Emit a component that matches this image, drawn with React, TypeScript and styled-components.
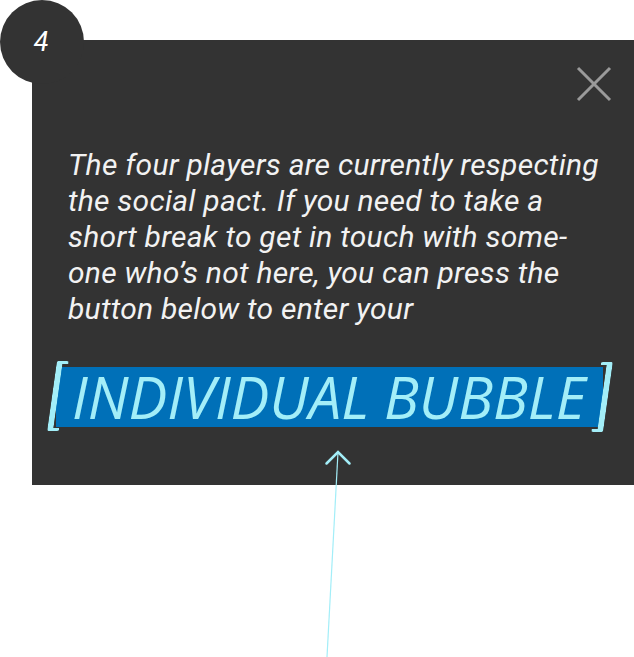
import React from "react";
import styled, { createGlobalStyle } from "styled-components";

const Global = createGlobalStyle`
  html, body { margin: 0; padding: 0; background: #ffffff; }
  body { font-family: Roboto, "Noto Sans", sans-serif; }
`;

const Page = styled.div`
  position: relative;
  width: 634px;
  height: 657px;
  overflow: hidden;
  padding: 40px 0 0 32px;
  box-sizing: border-box;
`;

const Panel = styled.section`
  position: relative;
  width: 602px;
  height: 445px;
  background: #333333;
  box-sizing: border-box;
  padding: 107px 0 0 36px;
  display: flex;
  flex-direction: column;
`;

const Badge = styled.div`
  position: absolute;
  left: -32px;
  top: -40px;
  width: 84px;
  height: 84px;
  border-radius: 50%;
  background: #333333;
  display: flex;
  align-items: center;
  justify-content: center;
  color: #ffffff;
  font-family: Roboto, sans-serif;
  font-style: italic;
  font-size: 27px;
  padding-right: 2px;
  box-sizing: border-box;
`;

const Close = styled.button`
  position: absolute;
  right: 22px;
  top: 26px;
  width: 36px;
  height: 36px;
  padding: 0;
  border: none;
  background: transparent;
  display: flex;
  align-items: center;
  justify-content: center;
`;

const Message = styled.p`
  margin: 0;
  font-family: Roboto, sans-serif;
  font-style: italic;
  font-weight: 400;
  font-size: 30px;
  line-height: 36px;
  letter-spacing: 0.25px;
  color: #f2f2f2;
  white-space: nowrap;
`;

const BubbleRow = styled.div`
  margin-top: 34px;
  margin-left: -20px;
  display: flex;
  align-items: flex-start;
`;

const Bracket = styled.span<{ $side: "left" | "right" }>`
  position: relative;
  z-index: 1;
  flex: 0 0 auto;
  display: block;
  width: 12px;
  height: 70px;
  box-sizing: border-box;
  border: 0 solid #a3eef8;
  border-top-width: 3.5px;
  border-bottom-width: 3.5px;
  ${(p) => (p.$side === "left" ? "border-left-width: 6px;" : "border-right-width: 6px;")}
  border-radius: 2px;
  transform: skewX(-8deg);
  margin-left: ${(p) => (p.$side === "left" ? "4px" : "-7px")};
  margin-right: ${(p) => (p.$side === "left" ? "-8px" : "0")};
  margin-top: ${(p) => (p.$side === "left" ? "0" : "1px")};
`;

const Highlight = styled.span`
  flex: 0 0 auto;
  display: block;
  margin-top: 6px;
  width: 547px;
  height: 60px;
  box-sizing: border-box;
  background: #0070b8;
  font-family: "Open Sans", sans-serif;
  font-style: italic;
  font-size: 58px;
  line-height: 60px;
  color: #a3eef8;
  padding-left: 16px;
  white-space: nowrap;
`;

const Pointer = styled.svg`
  position: absolute;
  left: 0;
  top: 0;
  pointer-events: none;
`;

export default function App() {
  return (
    <>
      <Global />
      <Page>
        <Panel>
          <Badge>4</Badge>
          <Close aria-label="close">
            <svg width="36" height="36" viewBox="0 0 36 36">
              <path d="M2 2 L34 34 M34 2 L2 34" stroke="#9a9a9a" strokeWidth="3" />
            </svg>
          </Close>
          <Message>
            The four players are currently respecting
            <br />
            the social pact. If you need to take a
            <br />
            short break to get in touch with some-
            <br />
            one who’s not here, you can press the
            <br />
            button below to enter your
          </Message>
          <BubbleRow>
            <Bracket $side="left" />
            <Highlight>INDIVIDUAL BUBBLE</Highlight>
            <Bracket $side="right" />
          </BubbleRow>
        </Panel>
        <Pointer width="634" height="657" viewBox="0 0 634 657">
          <path d="M338 452 L327 657" stroke="#a3eef8" strokeWidth="1.2" fill="none" />
          <path d="M326.5 463.5 L338 452 L349.5 463.5" stroke="#a3eef8" strokeWidth="2.5" fill="none" strokeLinecap="round" />
        </Pointer>
      </Page>
    </>
  );
}
